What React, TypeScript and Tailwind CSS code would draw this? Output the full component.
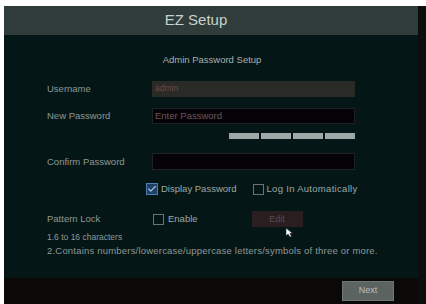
import { Check } from "lucide-react";

const font = { fontFamily: '"Liberation Sans", Arial, sans-serif' };

function Row({ label, children }: { label: string; children: React.ReactNode }) {
    return (
        <div className="flex items-center h-[17px]">
            <span className="w-[105px] shrink-0 text-[9.5px] text-[#8e9896]">{label}</span>
            {children}
        </div>
    );
}

function Box({ checked }: { checked?: boolean }) {
    return (
        <span
            className={
                checked
                    ? "w-[12px] h-[12px] border border-[#4f7fb0] bg-[#1f3f63] flex items-center justify-center shrink-0"
                    : "w-[11px] h-[11px] border border-[#6b7472] shrink-0"
            }
        >
            {checked && <Check className="w-[10px] h-[10px] text-[#9cc2e8]" strokeWidth={3} />}
        </span>
    );
}

export default function App() {
    return (
        <div className="w-[426px] h-[304px] bg-white pt-[6px] pl-[4px] flex overflow-hidden" style={font}>
            <div className="w-[414px] h-[298px] flex flex-col">
                <div className="h-[29px] shrink-0 bg-[#2f3c3a] flex items-center justify-center pr-[30px] text-[15px] text-[#c9d0ce]">
                    EZ Setup
                </div>

                <div className="flex-1 bg-[#041716] flex flex-col pl-[43px] pr-[63px] relative">
                    <div className="text-center text-[9.5px] text-[#a7b0ae] mt-[18px] pl-[22px]">Admin Password Setup</div>

                    <div className="mt-[13px]">
                        <Row label="Username">
                            <div className="flex-1 h-[16px] bg-[#2a2b27] text-[8.5px] text-[#6a4a48] flex items-center px-[3px]">admin</div>
                        </Row>
                    </div>

                    <div className="mt-[10px]">
                        <Row label="New Password">
                            <div className="flex-1 h-[16px] bg-[#050208] border border-[#1e2322] text-[9.5px] text-[#6e5656] flex items-center px-[2px]">
                                Enter Password
                            </div>
                        </Row>
                    </div>

                    <div className="flex justify-end gap-[2px] mt-[9px] h-[6px]">
                        <span className="w-[30px] bg-[#a0a8a7]" />
                        <span className="w-[30px] bg-[#a0a8a7]" />
                        <span className="w-[30px] bg-[#a0a8a7]" />
                        <span className="w-[30px] bg-[#a0a8a7]" />
                    </div>

                    <div className="mt-[14px]">
                        <Row label="Confirm Password">
                            <div className="flex-1 h-[17px] bg-[#050208] border border-[#1e2322]" />
                        </Row>
                    </div>

                    <div className="flex items-center h-[14px] mt-[12px] pl-[99px] text-[9.5px] text-[#9ea7a5] whitespace-nowrap">
                        <Box checked />
                        <span className="ml-[3px] shrink-0">Display Password</span>
                        <span className="ml-[16px] flex shrink-0"><Box /></span>
                        <span className="ml-[3px] shrink-0 tracking-[0.3px]">Log In Automatically</span>
                    </div>

                    <div className="flex items-center h-[18px] mt-[14px]">
                        <span className="w-[106px] shrink-0 text-[9.5px] text-[#8e9896]">Pattern Lock</span>
                        <Box />
                        <span className="ml-[4px] text-[9.5px] text-[#9ea7a5]">Enable</span>
                        <div className="ml-[54px] w-[51px] h-[16px] bg-[#2a1e20] flex items-center justify-center text-[9px] text-[#5a4c4c]">
                            Edit
                        </div>
                    </div>

                    <div className="text-[9.5px] text-[#8e9896] mt-[3px]">
                        <div className="text-[8.5px] leading-[13px]">1.6 to 16 characters</div>
                        <div className="whitespace-nowrap leading-[13px] tracking-[0.2px]">
                            2.Contains numbers/lowercase/uppercase letters/symbols of three or more.
                        </div>
                    </div>

                    <svg className="absolute left-[281px] top-[192px]" width="9" height="11" viewBox="0 0 9 11">
                        <path d="M1 1 L1 9 L3 7 L5 10 L6.5 9.3 L4.8 6.4 L7.5 6.3 Z" fill="#ffffff" stroke="#222" strokeWidth="0.6" />
                    </svg>
                </div>

                <div className="h-[26px] shrink-0 bg-[#0b0908] flex items-center justify-end pr-[24px]">
                    <div className="w-[52px] h-[20px] bg-[#5b6461] border border-[#6d7673] flex items-center justify-center text-[9px] text-[#b7bfbd]">
                        Next
                    </div>
                </div>
            </div>
            <div className="w-[8px] h-full bg-[#0c0e0e]" />
        </div>
    );
}
